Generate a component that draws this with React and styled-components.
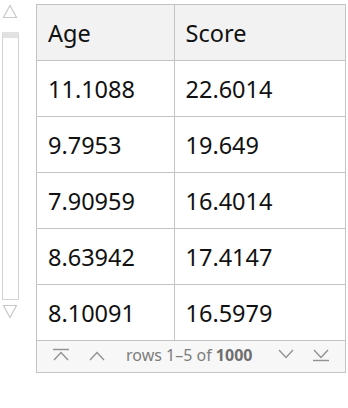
import React from "react";
import styled, { createGlobalStyle } from "styled-components";

const Global = createGlobalStyle`
  body {
    margin: 0;
    background: #ffffff;
    font-family: "Noto Sans", "Open Sans", sans-serif;
  }
`;

const Page = styled.div`
  display: flex;
  align-items: flex-start;
  padding-top: 4px;
  width: 348px;
  height: 408px;
`;

const Scroller = styled.div`
  width: 20px;
  display: flex;
  flex-direction: column;
  align-items: center;
`;

const Track = styled.div`
  width: 17px;
  height: 268px;
  margin: 13px 0 4px;
  border: 1px solid #d2d2d2;
  box-sizing: border-box;
  border-top: 6px solid #e2e2e2;
`;

const Box = styled.div`
  margin-left: 16px;
  width: 310px;
  border: 1px solid #c3c3c3;
  box-sizing: border-box;
`;

const Grid = styled.table`
  width: 100%;
  border-collapse: collapse;
  table-layout: fixed;
`;

const Cell = styled.td`
  height: 55px;
  padding: 0 11px;
  font-size: 23.5px;
  color: #111;
  border-bottom: 1px solid #c3c3c3;
  border-left: ${(p) => (p.$first ? "none" : "1px solid #c3c3c3")};
  background: ${(p) => (p.$head ? "#f2f2f2" : "#ffffff")};
  text-align: left;
  font-weight: 400;
  white-space: nowrap;
`;

const Footer = styled.div`
  height: 31px;
  background: #f7f7f7;
  display: flex;
  align-items: center;
  padding: 0 0 3px 15px;
  box-sizing: border-box;
  color: #7d7d7d;
  font-size: 16px;
`;

const IconSlot = styled.span`
  display: flex;
  width: ${(p) => p.$w}px;
`;

const Label = styled.span`
  margin-right: 25px;
  b {
    font-weight: 700;
    color: #6f6f6f;
  }
`;

const Tri = ({ down }) => (
  <svg width="16" height="15" viewBox="0 0 16 15">
    <polygon
      points={down ? "1.5,1.5 14.5,1.5 8,13.5" : "8,1.5 14.5,13.5 1.5,13.5"}
      fill="none"
      stroke="#c9c9c9"
      strokeWidth="1.2"
    />
  </svg>
);

const Chevron = ({ dir, bar }) => {
  const up = dir === "up";
  return (
    <svg width="18" height="16" viewBox="0 0 18 16">
      <polyline
        points={up ? "2,13 9,5.5 16,13" : "2,3 9,10.5 16,3"}
        fill="none"
        stroke="#929292"
        strokeWidth="1.4"
      />
      {bar && (
        <line
          x1="1"
          x2="17"
          y1={up ? 2.5 : 13.5}
          y2={up ? 2.5 : 13.5}
          stroke="#929292"
          strokeWidth="1.4"
        />
      )}
    </svg>
  );
};

const rows = [
  ["11.1088", "22.6014"],
  ["9.7953", "19.649"],
  ["7.90959", "16.4014"],
  ["8.63942", "17.4147"],
  ["8.10091", "16.5979"],
];

export default function App() {
  return (
    <>
      <Global />
      <Page>
        <Scroller>
          <Tri />
          <Track />
          <Tri down />
        </Scroller>
        <Box>
          <Grid>
            <colgroup>
              <col style={{ width: "137px" }} />
              <col />
            </colgroup>
            <thead>
              <tr>
                <Cell as="th" $head $first>
                  Age
                </Cell>
                <Cell as="th" $head>
                  Score
                </Cell>
              </tr>
            </thead>
            <tbody>
              {rows.map(([a, s]) => (
                <tr key={a}>
                  <Cell $first>{a}</Cell>
                  <Cell>{s}</Cell>
                </tr>
              ))}
            </tbody>
          </Grid>
          <Footer>
            <IconSlot $w={36}>
              <Chevron dir="up" bar />
            </IconSlot>
            <IconSlot $w={38}>
              <Chevron dir="up" />
            </IconSlot>
            <Label>
              rows 1–5 of <b>1000</b>
            </Label>
            <IconSlot $w={35}>
              <Chevron dir="down" />
            </IconSlot>
            <IconSlot $w={20}>
              <Chevron dir="down" bar />
            </IconSlot>
          </Footer>
        </Box>
      </Page>
    </>
  );
}
